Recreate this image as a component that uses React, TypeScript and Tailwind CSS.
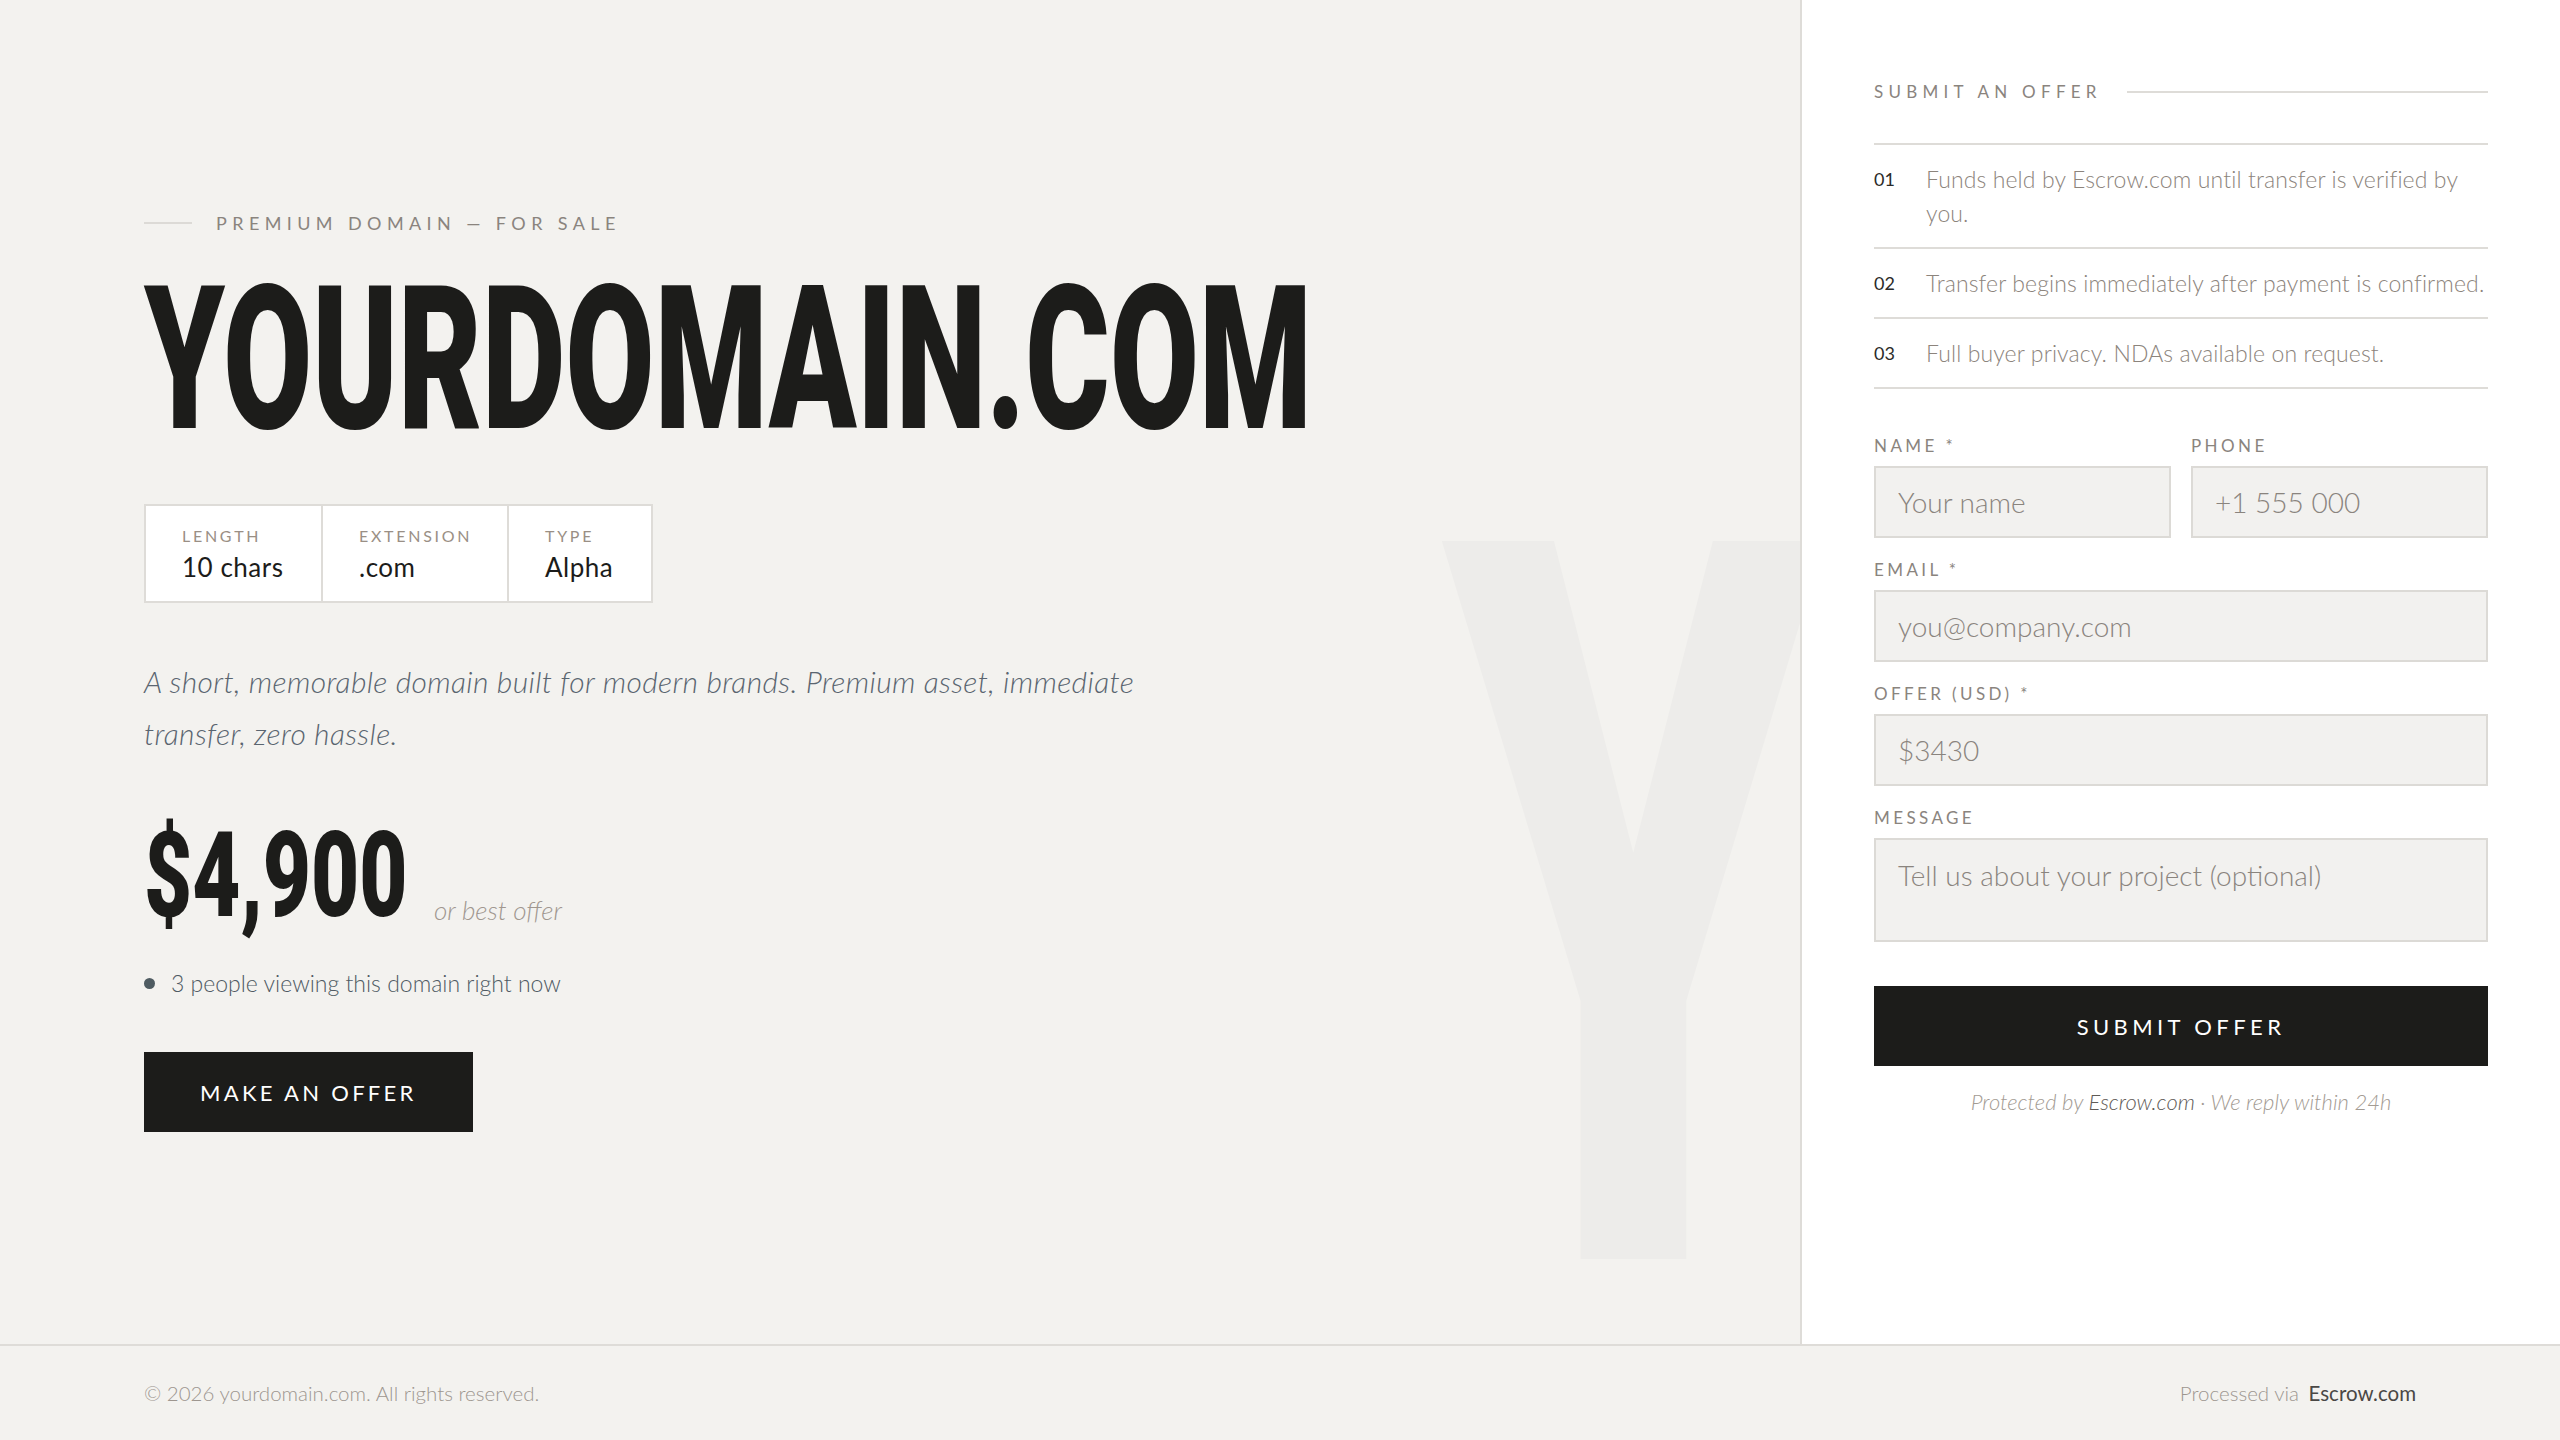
import React from "react";

const steps = [
  { n: "01", text: "Funds held by Escrow.com until transfer is verified by you." },
  { n: "02", text: "Transfer begins immediately after payment is confirmed." },
  { n: "03", text: "Full buyer privacy. NDAs available on request." },
];

const stats = [
  { label: "LENGTH", value: "10 chars", w: "w-[177px] border-r-2" },
  { label: "EXTENSION", value: ".com", w: "w-[186px] border-r-2" },
  { label: "TYPE", value: "Alpha", w: "w-[142px]" },
];

function FieldLabel({ children }: { children: React.ReactNode }) {
  return (
    <label className="mb-[8px] block text-[17px] leading-[24px] tracking-[0.2em] text-[#8a847e]">
      {children}
    </label>
  );
}

const inputCls =
  "h-[72px] w-full border-2 border-[#dcdad6] bg-[#f2f1ef] px-[22px] text-[28px] font-light text-[#3a3836] outline-none placeholder:text-[#8a847e]";

function OfferForm() {
  return (
    <form className="mt-[45px]" onSubmit={(e) => e.preventDefault()}>
      <div className="grid grid-cols-2 gap-x-[20px]">
        <div>
          <FieldLabel>NAME *</FieldLabel>
          <input className={inputCls} placeholder="Your name" />
        </div>
        <div>
          <FieldLabel>PHONE</FieldLabel>
          <input className={inputCls} placeholder="+1 555 000" />
        </div>
      </div>
      <div className="mt-[20px]">
        <FieldLabel>EMAIL *</FieldLabel>
        <input className={inputCls} placeholder="you@company.com" />
      </div>
      <div className="mt-[20px]">
        <FieldLabel>OFFER (USD) *</FieldLabel>
        <input className={inputCls} placeholder="$3430" />
      </div>
      <div className="mt-[20px]">
        <FieldLabel>MESSAGE</FieldLabel>
        <textarea
          className="block h-[104px] w-full resize-none border-2 border-[#dcdad6] bg-[#f2f1ef] px-[22px] pt-[17px] text-[28px] font-light leading-[36px] text-[#3a3836] outline-none placeholder:text-[#8a847e]"
          placeholder="Tell us about your project (optional)"
        />
      </div>
      <button
        type="submit"
        className="mt-[44px] flex h-[80px] w-full items-center justify-center bg-[#1c1c1a] text-[22px] tracking-[0.2em] text-white"
      >
        SUBMIT OFFER
      </button>
      <p className="mt-[22px] text-center text-[22px] font-light italic leading-[28px] text-[#a39b93]">
        Protected by <span className="text-[#5f5b57]">Escrow.com</span> · We reply within 24h
      </p>
    </form>
  );
}

export default function App() {
  return (
    <div className="flex h-screen flex-col bg-[#f3f2ef] font-['Lato',sans-serif] text-[#1c1c1a]">
      <div className="flex min-h-0 flex-1">
        <main className="relative min-w-0 flex-1 overflow-hidden pl-[144px] pt-[211px]">
          <span className="pointer-events-none absolute left-[1443px] top-[409px] inline-block origin-left scale-x-[0.6] select-none font-['Roboto',sans-serif] text-[1010px] font-black leading-none text-[#edecea]">
            Y
          </span>

          <div className="relative">
            <div className="flex items-center gap-[24px]">
              <span className="h-[2px] w-[48px] bg-[#dcdad6]" />
              <span className="text-[18px] leading-[24px] tracking-[0.3em] text-[#8a847e]">
                PREMIUM DOMAIN — FOR SALE
              </span>
            </div>

            <h1 className="mt-[25px] h-[200px] whitespace-nowrap">
              <span className="inline-block origin-left scale-x-[0.645] font-['Roboto',sans-serif] text-[200px] font-black leading-none text-[#1c1c1a]">
                YOURDOMAIN.COM
              </span>
            </h1>

            <div className="mt-[44px] inline-flex border-2 border-[#dedcd8] bg-white">
              {stats.map((s) => (
                <div key={s.label} className={`${s.w} border-[#dedcd8] py-[18px] pl-[36px]`}>
                  <div className="text-[16px] leading-[24px] tracking-[0.17em] text-[#9a8f85]">{s.label}</div>
                  <div className="mt-[3px] text-[26px] leading-[32px] tracking-[0.02em] text-[#1c1c1a]">{s.value}</div>
                </div>
              ))}
            </div>

            <p className="mt-[52px] max-w-[1040px] text-[30px] font-light italic leading-[52px] tracking-[0.012em] text-[#5a6570]">
              A short, memorable domain built for modern brands. Premium asset, immediate transfer, zero hassle.
            </p>

            <div className="mt-[58px] flex items-baseline">
              <div className="w-[262px] whitespace-nowrap">
                <span className="inline-block origin-left scale-x-[0.705] font-['Roboto',sans-serif] text-[118px] font-black leading-none text-[#1c1c1a]">
                  $4,900
                </span>
              </div>
              <span className="relative top-[4px] ml-[28px] text-[26px] font-light italic text-[#a0978f]">or best offer</span>
            </div>

            <div className="mt-[32px] flex items-center">
              <span className="h-[11px] w-[11px] rounded-full bg-[#4e5b61]" />
              <span className="ml-[16px] text-[23px] font-light leading-[32px] text-[#4f5a63]">
                3 people viewing this domain right now
              </span>
            </div>

            <button className="mt-[53px] flex h-[80px] items-center bg-[#1c1c1a] px-[56px] text-[22px] tracking-[0.15em] text-white">
              MAKE AN OFFER
            </button>
          </div>
        </main>

        <aside className="w-[760px] shrink-0 border-l-2 border-[#dedcd8] bg-white px-[72px] pt-[80px]">
          <div className="flex items-center gap-[25px]">
            <span className="text-[17px] leading-[24px] tracking-[0.31em] text-[#8a847e]">SUBMIT AN OFFER</span>
            <span className="h-[2px] flex-1 bg-[#dedcd8]" />
          </div>

          <ul className="mt-[39px] border-t-2 border-[#dedcd8]">
            {steps.map((s) => (
              <li key={s.n} className="flex border-b-2 border-[#dedcd8] py-[17px]">
                <span className="w-[52px] shrink-0 text-[18px] leading-[34px] text-[#2b2b29]">{s.n}</span>
                <span className="text-[23px] font-light leading-[34px] tracking-[0.005em] text-[#8c847c]">{s.text}</span>
              </li>
            ))}
          </ul>

          <OfferForm />
        </aside>
      </div>

      <footer className="flex h-[96px] shrink-0 items-center justify-between border-t-2 border-[#dedcd8] px-[144px] text-[20.5px] font-light text-[#9d968f]">
        <span>© 2026 yourdomain.com. All rights reserved.</span>
        <span>
          Processed via <span className="ml-[4px] font-normal text-[#4a4845]">Escrow.com</span>
        </span>
      </footer>
    </div>
  );
}
